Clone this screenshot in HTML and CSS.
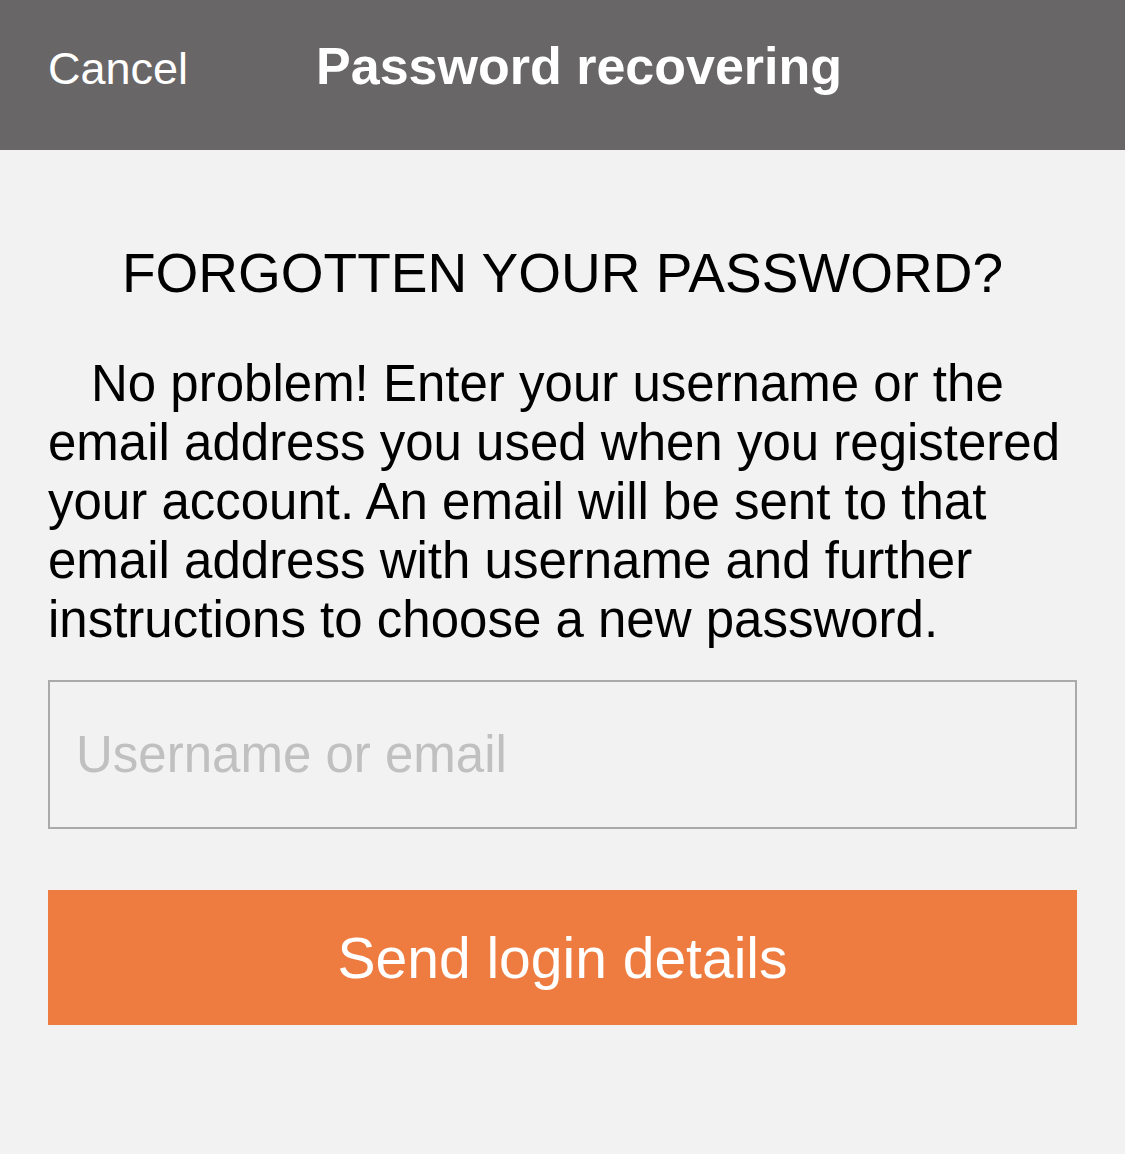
FILE: index.html
```html
<!DOCTYPE html>
<html lang="en">
<head>
    <meta charset="UTF-8">
    <meta name="viewport" content="width=device-width, initial-scale=1.0">
    <title>Password recovering</title>
    <link rel="stylesheet" href="styles.css">
</head>
<body>
    <!-- barra in alto -->
    <div class="topbar">
        <a class="cancel" href="#">Cancel</a>
        <span class="titolo">Password recovering</span>
    </div>
    <!-- contenuto -->
    <div class="contenuto">
        <h1 class="domanda">FORGOTTEN YOUR PASSWORD?</h1>
        <p class="spiega">No problem! Enter your username or the email address you used when you registered your account. An email will be sent to that email address with username and further instructions to choose a new password.</p>
        <input type="text" class="campo" placeholder="Username or email">
        <button class="invia">Send login details</button>
    </div>
</body>
</html>
```

FILE: styles.css
```css
:root{
    --bar-color: #686667;
    --bg-color: #f2f2f2;
    --text-color: #000000;
    --orange: #ee7c40;
    --border-color: #aaaaaa;
    --hint-color: #c0c0c0;
}
body {
    margin: 0;
    background-color: var(--bg-color);
    color: var(--text-color);
    font-family: "Liberation Sans", Arial, Helvetica, sans-serif;
}
.topbar{
    background-color: var(--bar-color);
    height: 150px;
    box-sizing: border-box;
    padding: 40px 48px 0 48px;
    display: flex;
    align-items: baseline;
    gap: 128px;
}
.cancel{
    color: #ffffff;
    text-decoration: none;
    font-size: 45px;
    line-height: 1;
}
.titolo{
    color: #ffffff;
    font-size: 52px;
    font-weight: bold;
    line-height: 1;
}
.contenuto{
    padding: 0 48px;
}
.domanda{
    margin: 96px 0 0 0;
    font-size: 55px;
    font-weight: normal;
    line-height: 1;
    text-align: center;
}
.spiega{
    margin: 53px 0 0 0;
    font-size: 51px;
    line-height: 59px;
    text-indent: 43px;
}
.campo{
    display: block;
    box-sizing: border-box;
    width: 100%;
    height: 149px;
    margin-top: 31px;
    padding: 0 0 0 26px;
    border: 2px solid var(--border-color);
    background-color: var(--bg-color);
    font-family: inherit;
    font-size: 51px;
    color: var(--text-color);
    outline: none;
    border-radius: 0;
}
.campo::placeholder{
    color: var(--hint-color);
}
.invia{
    display: block;
    box-sizing: border-box;
    width: 100%;
    height: 135px;
    margin-top: 61px;
    border: 0;
    border-radius: 0;
    background-color: var(--orange);
    color: #ffffff;
    font-family: inherit;
    font-size: 57px;
    text-align: center;
}
```
